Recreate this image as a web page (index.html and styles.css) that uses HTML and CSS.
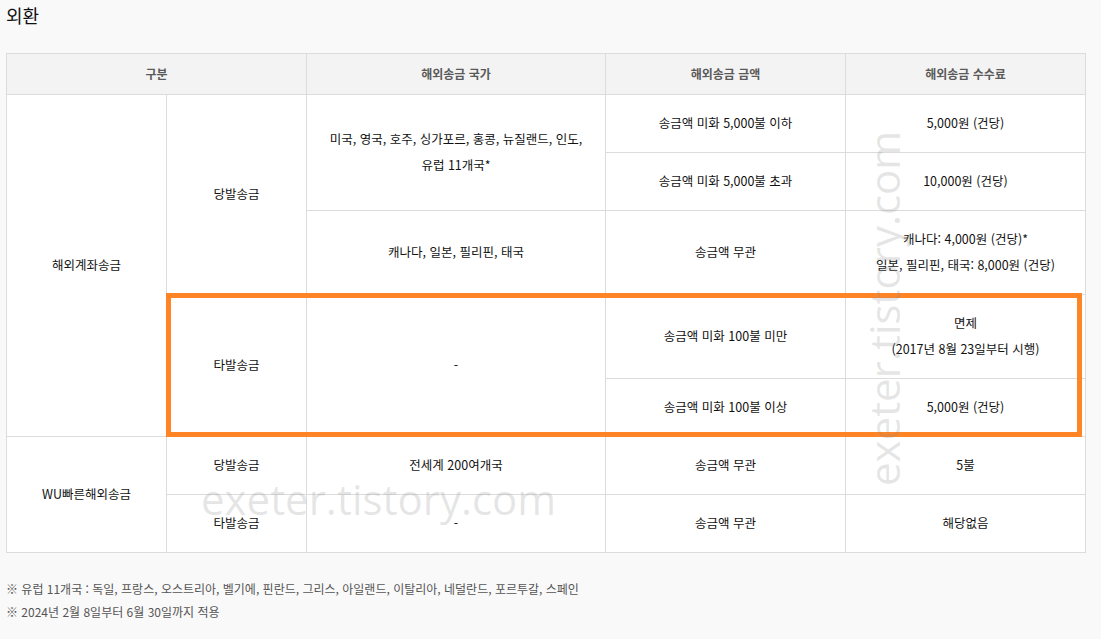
FILE: index.html
```html
<!DOCTYPE html>
<html lang="ko">
<head>
<meta charset="utf-8">
<title>외환</title>
<link rel="stylesheet" href="styles.css">
</head>
<body>
<div class="page">
  <h2 class="title">외환</h2>
  <div class="table-wrap">
    <table class="fx">
      <colgroup>
        <col class="c1"><col class="c2"><col class="c3"><col class="c4"><col class="c5">
      </colgroup>
      <thead>
        <tr>
          <th colspan="2">구분</th>
          <th>해외송금 국가</th>
          <th>해외송금 금액</th>
          <th>해외송금 수수료</th>
        </tr>
      </thead>
      <tbody>
        <tr>
          <td rowspan="5">해외계좌송금</td>
          <td rowspan="3">당발송금</td>
          <td rowspan="2">미국, 영국, 호주, 싱가포르, 홍콩, 뉴질랜드, 인도,<br>유럽 11개국*</td>
          <td>송금액 미화 5,000불 이하</td>
          <td>5,000원 (건당)</td>
        </tr>
        <tr>
          <td>송금액 미화 5,000불 초과</td>
          <td>10,000원 (건당)</td>
        </tr>
        <tr>
          <td>캐나다, 일본, 필리핀, 태국</td>
          <td>송금액 무관</td>
          <td>캐나다: 4,000원 (건당)*<br>일본, 필리핀, 태국: 8,000원 (건당)</td>
        </tr>
        <tr>
          <td rowspan="2">타발송금</td>
          <td rowspan="2">-</td>
          <td>송금액 미화 100불 미만</td>
          <td>면제<br>(2017년 8월 23일부터 시행)</td>
        </tr>
        <tr>
          <td>송금액 미화 100불 이상</td>
          <td>5,000원 (건당)</td>
        </tr>
        <tr>
          <td rowspan="2">WU빠른해외송금</td>
          <td>당발송금</td>
          <td>전세계 200여개국</td>
          <td>송금액 무관</td>
          <td>5불</td>
        </tr>
        <tr>
          <td>타발송금</td>
          <td>-</td>
          <td>송금액 무관</td>
          <td>해당없음</td>
        </tr>
      </tbody>
    </table>
    <div class="highlight"></div>
    <div class="wm wm-h">exeter.tistory.com</div>
    <div class="wm wm-v">exeter.tistory.com</div>
  </div>
  <div class="notes">
    <p>※ 유럽 11개국 : 독일, 프랑스, 오스트리아, 벨기에, 핀란드, 그리스, 아일랜드, 이탈리아, 네덜란드, 포르투갈, 스페인</p>
    <p>※ 2024년 2월 8일부터 6월 30일까지 적용</p>
  </div>
</div>
</body>
</html>
```

FILE: styles.css
```css
html, body {
  margin: 0;
  padding: 0;
  background: #f9f9f9;
}

body {
  font-family: "Noto Sans CJK KR", "Noto Sans", sans-serif;
  font-size: 12px;
  color: #111;
}

.page {
  padding: 0 6px;
}

.title {
  margin: 0;
  padding-top: 2px;
  height: 51px;
  font-size: 18px;
  line-height: 26px;
  font-weight: normal;
  color: #111;
}

.table-wrap {
  position: relative;
  width: 1080px;
}

.fx {
  width: 1080px;
  table-layout: fixed;
  border-collapse: collapse;
  background: #fff;
  border: 1px solid #dcdcdc;
}

.c1 { width: 160px; }
.c2 { width: 140px; }
.c3 { width: 299px; }
.c4 { width: 240px; }
.c5 { width: 240px; }

.fx th,
.fx td {
  border: 1px solid #dcdcdc;
  text-align: center;
  vertical-align: middle;
  line-height: 26px;
}

.fx th {
  background: #f3f3f3;
  color: #5a5a5a;
  font-weight: bold;
  padding: 7px 8px;
}

.fx td {
  padding: 15px 8px 16px;
  color: #111;
  font-size: 12.5px;
}

.highlight {
  position: absolute;
  left: 160px;
  top: 240px;
  width: 906px;
  height: 134px;
  border: 5px solid #ff8426;
  pointer-events: none;
}

.wm {
  position: absolute;
  font-family: "Open Sans", "Liberation Sans", sans-serif;
  font-size: 42px;
  line-height: 1;
  color: rgba(140, 140, 140, 0.22);
  white-space: nowrap;
  pointer-events: none;
}

.wm-h {
  left: 195px;
  top: 425px;
}

.wm-v {
  left: 857px;
  top: 433px;
  transform-origin: 0 0;
  transform: rotate(-90deg);
}

.notes {
  padding-top: 24px;
}

.notes p {
  margin: 0;
  line-height: 23px;
  color: #555;
  font-size: 12px;
}
```
